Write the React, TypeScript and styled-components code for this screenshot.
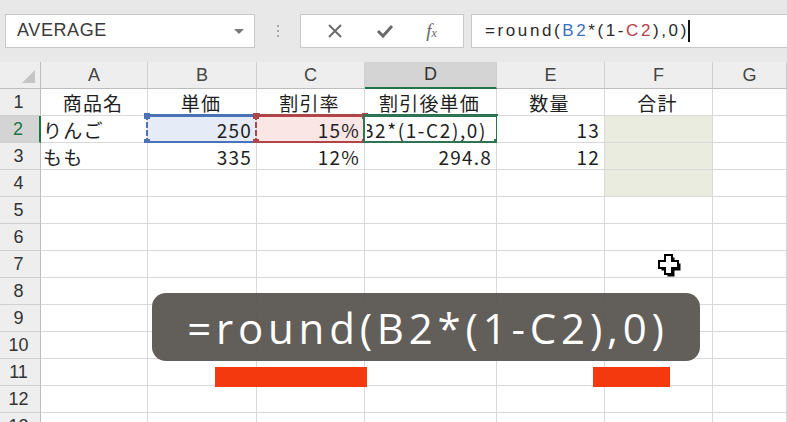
import React from 'react';
import styled, { createGlobalStyle } from 'styled-components';

const GlobalStyle = createGlobalStyle`
    html, body {
        margin: 0;
        padding: 0;
        background: #ffffff;
        overflow: hidden;
    }
    body {
        font-family: "Noto Sans CJK JP", "Liberation Sans", sans-serif;
        color: #222;
    }
`

const Page = styled.div`
    position: relative;
    width: 787px;
    height: 422px;
    overflow: hidden;
    background: #ffffff;
`

// ---- formula bar ----
const TopBar = styled.div`
    display: flex;
    align-items: center;
    height: 62px;
    padding-left: 5px;
    padding-bottom: 1px;
    box-sizing: border-box;
    background: #e8e8e8;
`
const NameBox = styled.div`
    display: flex;
    align-items: center;
    justify-content: space-between;
    width: 250px;
    height: 34px;
    box-sizing: border-box;
    padding: 0 10px 0 11px;
    background: #fff;
    border: 1px solid #c8c8c8;
    font-family: "Liberation Sans", Arial, sans-serif;
    font-size: 18px;
    color: #3a3a3a;
    letter-spacing: 0.6px;
`
const DropArrow = styled.span`
    width: 0;
    height: 0;
    border-left: 5px solid transparent;
    border-right: 5px solid transparent;
    border-top: 5px solid #7a7a7a;
    margin-top: 2px;
`
const Grip = styled.div`
    display: flex;
    flex-direction: column;
    gap: 3px;
    margin: 0 21px 0 22px;
    span {
        width: 2px;
        height: 2px;
        background: #a8a8a8;
    }
`
const ButtonBox = styled.div`
    display: flex;
    align-items: center;
    justify-content: space-around;
    width: 164px;
    height: 34px;
    box-sizing: border-box;
    padding: 0 10px;
    background: #fff;
    border: 1px solid #c8c8c8;
    margin-right: 7px;
`
const Fx = styled.span`
    font-family: "Liberation Serif", "Times New Roman", serif;
    font-style: italic;
    font-size: 19px;
    color: #666;
    small {
        font-size: 12px;
    }
`
const FormulaInput = styled.div`
    flex: 1;
    display: flex;
    align-items: center;
    height: 34px;
    box-sizing: border-box;
    padding-left: 13px;
    margin-right: -4px;
    background: #fff;
    border: 1px solid #c8c8c8;
    font-family: "Liberation Sans", Arial, sans-serif;
    font-size: 17px;
    letter-spacing: 2.6px;
    color: #2a2a2a;
`
const Ref = styled.span<{ $color: string }>`
    color: ${p => p.$color};
`
const Caret = styled.span`
    display: inline-block;
    width: 2px;
    height: 22px;
    background: #111;
    margin-left: -1px;
`

// ---- sheet ----
const Sheet = styled.div`
    display: grid;
    grid-template-columns: 41px 107px 109px 108px 132px 108px 108px 1fr;
    grid-auto-rows: 27px;
`
const ColHead = styled.div<{ $active?: boolean }>`
    display: flex;
    align-items: center;
    justify-content: center;
    box-sizing: border-box;
    background: ${p => (p.$active ? '#d4d4d4' : '#eeeeee')};
    border-right: 1px solid #cfcfcf;
    border-bottom: ${p => (p.$active ? '2px solid #217346' : '1px solid #bdbdbd')};
    font-family: "Liberation Sans", Arial, sans-serif;
    font-size: 18px;
    color: ${p => (p.$active ? '#333' : '#444')};
`
const Corner = styled.div`
    position: relative;
    box-sizing: border-box;
    background: #eeeeee;
    border-right: 1px solid #bdbdbd;
    border-bottom: 1px solid #bdbdbd;
    &::after {
        content: '';
        position: absolute;
        right: 5px;
        bottom: 5px;
        border-left: 13px solid transparent;
        border-bottom: 13px solid #c4c4c4;
    }
`
const RowHead = styled.div<{ $active?: boolean }>`
    display: flex;
    align-items: center;
    justify-content: center;
    padding-right: 3px;
    box-sizing: border-box;
    background: ${p => (p.$active ? '#d4d4d4' : '#eeeeee')};
    border-right: ${p => (p.$active ? '2px solid #217346' : '1px solid #bdbdbd')};
    border-bottom: 1px solid #d0d0d0;
    font-family: "Liberation Sans", Arial, sans-serif;
    font-size: 18px;
    color: ${p => (p.$active ? '#217346' : '#333')};
`
const Cell = styled.div<{ $align?: 'left' | 'center' | 'right'; $fill?: string }>`
    position: relative;
    display: flex;
    align-items: center;
    justify-content: ${p => (p.$align === 'right' ? 'flex-end' : p.$align === 'center' ? 'center' : 'flex-start')};
    box-sizing: border-box;
    padding: 0 4px 0 2px;
    background: ${p => p.$fill || '#fff'};
    border-right: 1px solid #d9d9d9;
    border-bottom: 1px solid #d9d9d9;
    white-space: nowrap;
    font-family: "Noto Sans CJK JP", "Liberation Sans", sans-serif;
    font-size: 19px;
    letter-spacing: 1.2px;
    color: #1e1e1e;
`
const Clip = styled.span`
    overflow: hidden;
    display: flex;
    justify-content: flex-end;
    width: 100%;
    padding-right: 5px;
    letter-spacing: 1.6px;
`
const Marquee = styled.div<{ $color: string; $solid?: boolean }>`
    position: absolute;
    left: -2px;
    right: -2px;
    top: -2px;
    bottom: -2px;
    border-top: 3px solid ${p => p.$color};
    border-bottom: 3px solid ${p => p.$color};
    border-left: 2px ${p => (p.$solid ? 'solid' : 'dashed')} ${p => p.$color};
    border-right: 2px ${p => (p.$solid ? 'solid' : 'dashed')} ${p => p.$color};
    pointer-events: none;
`
const Handle = styled.span<{ $color: string; $x: 'left' | 'right'; $y: 'top' | 'bottom' }>`
    position: absolute;
    width: 6px;
    height: 6px;
    background: ${p => p.$color};
    ${p => p.$x}: -4px;
    ${p => p.$y}: -4px;
`

// ---- overlays ----
const Caption = styled.div`
    position: absolute;
    left: 152px;
    top: 293px;
    width: 548px;
    height: 68px;
    display: flex;
    align-items: center;
    justify-content: center;
    padding-left: 4px;
    box-sizing: border-box;
    border-radius: 14px;
    background: rgba(88, 84, 80, 0.94);
    font-family: "Open Sans", "Noto Sans", sans-serif;
    font-size: 42px;
    letter-spacing: 4.8px;
    color: #fff;
`
const Underline = styled.div<{ $left: number; $width: number }>`
    position: absolute;
    top: 367px;
    left: ${p => p.$left}px;
    width: ${p => p.$width}px;
    height: 20px;
    background: #f4390f;
`
const Cursor = styled.svg`
    position: absolute;
    left: 657px;
    top: 253px;
`

const cols = ['A', 'B', 'C', 'D', 'E', 'F', 'G'];

type CellData = { text?: string; align?: 'left' | 'center' | 'right' };

const rows: CellData[][] = [
    [
        { text: '商品名', align: 'center' },
        { text: '単価', align: 'center' },
        { text: '割引率', align: 'center' },
        { text: '割引後単価', align: 'center' },
        { text: '数量', align: 'center' },
        { text: '合計', align: 'center' },
        {},
    ],
    [
        { text: 'りんご' },
        { text: '250', align: 'right' },
        { text: '15%', align: 'right' },
        { text: '=round(B2*(1-C2),0)', align: 'right' },
        { text: '13', align: 'right' },
        {},
        {},
    ],
    [
        { text: 'もも' },
        { text: '335', align: 'right' },
        { text: '12%', align: 'right' },
        { text: '294.8', align: 'right' },
        { text: '12', align: 'right' },
        {},
        {},
    ],
];

const TOTAL_ROWS = 13;

function Corners({ color }: { color: string }) {
    return (
        <>
            <Handle $color={color} $x="left" $y="top" />
            <Handle $color={color} $x="right" $y="top" />
            <Handle $color={color} $x="left" $y="bottom" />
            <Handle $color={color} $x="right" $y="bottom" />
        </>
    );
}

function fillFor(r: number, c: number): string | undefined {
    if (r === 2 && c === 1) return '#e6ecf7';
    if (r === 2 && c === 2) return '#fbe6e6';
    if (c === 5 && r >= 2 && r <= 4) return '#e9ecdf';
    return undefined;
}

export default function App() {
    return (
        <Page>
            <GlobalStyle />
            <TopBar>
                <NameBox>
                    AVERAGE
                    <DropArrow />
                </NameBox>
                <Grip>
                    <span />
                    <span />
                    <span />
                </Grip>
                <ButtonBox>
                    <svg width="16" height="16" viewBox="0 0 16 16">
                        <path d="M2 2 L14 14 M14 2 L2 14" stroke="#6b6b6b" strokeWidth="2" />
                    </svg>
                    <svg width="18" height="16" viewBox="0 0 18 16">
                        <path d="M2 8 L7 13 L16 3" stroke="#6b6b6b" strokeWidth="3" fill="none" />
                    </svg>
                    <Fx>
                        f<small>x</small>
                    </Fx>
                </ButtonBox>
                <FormulaInput>
                    =round(<Ref $color="#3e70c0">B2</Ref>*(1-<Ref $color="#b8404a">C2</Ref>),0)
                    <Caret />
                </FormulaInput>
            </TopBar>

            <Sheet>
                <Corner />
                {cols.map(c => (
                    <ColHead key={c} $active={c === 'D'}>
                        {c}
                    </ColHead>
                ))}
                {Array.from({ length: TOTAL_ROWS }, (_, i) => {
                    const r = i + 1;
                    const data = rows[i] || [];
                    return (
                        <React.Fragment key={r}>
                            <RowHead $active={r === 2}>{r}</RowHead>
                            {cols.map((c, ci) => {
                                const d = data[ci] || {};
                                return (
                                    <Cell key={c} $align={d.align} $fill={fillFor(r, ci)}>
                                        {r === 2 && c === 'D' ? <Clip>{d.text}</Clip> : d.text}
                                        {r === 2 && c === 'B' && (
                                            <Marquee $color="#4a72b8">
                                                <Corners color="#4a72b8" />
                                            </Marquee>
                                        )}
                                        {r === 2 && c === 'C' && (
                                            <Marquee $color="#b04449">
                                                <Corners color="#b04449" />
                                            </Marquee>
                                        )}
                                        {r === 2 && c === 'D' && (
                                            <Marquee $color="#2e7352" $solid>
                                                <Handle $color="#2e7352" $x="right" $y="bottom" />
                                            </Marquee>
                                        )}
                                    </Cell>
                                );
                            })}
                        </React.Fragment>
                    );
                })}
            </Sheet>

            <Cursor width="26" height="26" viewBox="0 0 26 26">
                <path d="M9 3 H16 V9 H22 V16 H16 V22 H9 V16 H3 V9 H9 Z" fill="#000" transform="translate(1.5 1.5)" />
                <path d="M8 2 H15 V8 H21 V15 H15 V21 H8 V15 H2 V8 H8 Z" fill="#fff" stroke="#000" strokeWidth="2" />
            </Cursor>

            <Caption>=round(B2*(1-C2),0)</Caption>
            <Underline $left={215} $width={152} />
            <Underline $left={593} $width={77} />
        </Page>
    );
}
